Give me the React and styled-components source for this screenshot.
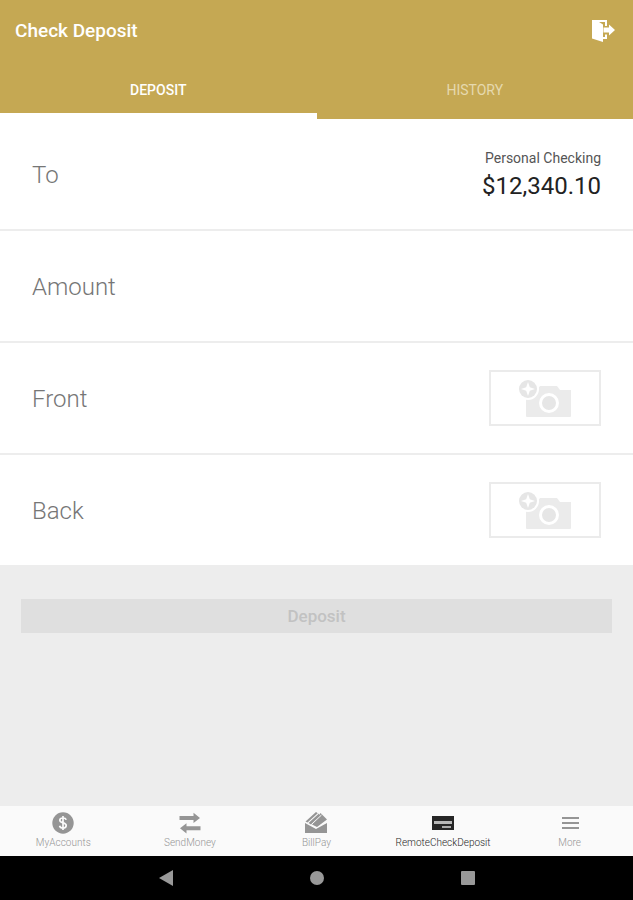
import React, { useState } from "react";
import styled, { createGlobalStyle, ThemeProvider } from "styled-components";

const theme = {
  gold: "#c5a853",
  pageBg: "#ededed",
  line: "#ededed",
  faint: "#ebebeb",
  grey: "#959595",
  dark: "#262626",
};

const GlobalStyle = createGlobalStyle`
  * {
    box-sizing: border-box;
  }
  body {
    margin: 0;
    font-family: Roboto, "Liberation Sans", sans-serif;
    background-color: ${(props) => props.theme.pageBg};
  }
  button, input {
    font-family: inherit;
    border: 0;
    padding: 0;
    background: none;
  }
`;

const Page = styled.div`
  min-height: 100vh;
  display: flex;
  flex-direction: column;
`;

const Header = styled.header`
  background-color: ${(props) => props.theme.gold};
  color: white;
`;

const TitleBar = styled.div`
  height: 61px;
  padding: 0 18px 0 15px;
  display: flex;
  align-items: center;
  justify-content: space-between;
`;

const Title = styled.h1`
  margin: 0;
  font-size: 19px;
  line-height: 24px;
  font-weight: 500;
`;

const ExitButton = styled.button`
  display: flex;
  cursor: pointer;
`;

const Tabs = styled.div`
  display: grid;
  grid-template-columns: 1fr 1fr;
`;

const Tab = styled.button`
  height: 58px;
  border-bottom: 6px solid ${(props) => (props.$active ? "white" : "transparent")};
  padding-top: 6px;
  font-size: 14px;
  font-weight: ${(props) => (props.$active ? 500 : 400)};
  color: ${(props) => (props.$active ? "white" : "#e6d9ae")};
  cursor: pointer;
`;

const Form = styled.form`
  flex: 1;
`;

const Rows = styled.div`
  display: grid;
  gap: 2px;
  background-color: ${(props) => props.theme.line};
`;

const Row = styled.div`
  min-height: 110px;
  padding: 0 32px;
  display: flex;
  align-items: center;
  justify-content: space-between;
  background-color: white;
`;

const Label = styled.label`
  padding-top: 1px;
  font-size: 24px;
  line-height: 32px;
  font-weight: 300;
  color: #767676;
`;

const Account = styled.output`
  padding-top: 3px;
  text-align: right;
`;

const AccountName = styled.div`
  font-size: 14px;
  line-height: 20px;
  color: #555555;
`;

const Balance = styled.div`
  font-size: 24px;
  line-height: 36px;
  color: #222222;
`;

const AmountInput = styled.input`
  flex: 1;
  min-width: 0;
  margin-left: 24px;
  font-size: 24px;
  text-align: right;
  outline: none;
`;

const PhotoButton = styled.button`
  width: 112px;
  height: 56px;
  border: 2px solid ${(props) => props.theme.faint};
  display: flex;
  align-items: center;
  justify-content: center;
  cursor: pointer;
`;

const Actions = styled.div`
  padding: 34px 21px;
`;

const SubmitButton = styled.button`
  width: 100%;
  height: 34px;
  background-color: #dfdfdf;
  color: #c2c2c2;
  font-size: 17px;
  font-weight: 500;
`;

const BottomNav = styled.nav`
  height: 50px;
  display: grid;
  grid-template-columns: repeat(5, 1fr);
  background-color: #fafafa;
`;

const NavLink = styled.a`
  display: flex;
  flex-direction: column;
  align-items: center;
  padding-top: 5px;
  font-size: 10px;
  line-height: 16px;
  font-weight: 300;
  text-decoration: none;
  color: ${(props) => (props.$active ? props.theme.dark : props.theme.grey)};
`;

const SystemBar = styled.footer`
  height: 44px;
  padding: 0 90px;
  display: grid;
  grid-template-columns: repeat(3, 1fr);
  background-color: black;
`;

const SystemButton = styled.button`
  display: flex;
  align-items: center;
  justify-content: center;
`;

const ExitIcon = () => (
  <svg width="24" height="24" viewBox="0 0 24 24" fill="white">
    <path d="M1 1h15v6h-2V3H8l4 2.500v17.500L1 19.500z" />
    <path d="M14 15.500h2v4.500h-5v-2h3z" />
    <path d="M12.500 8.500H18V5.500l6 5.500-6 5.500v-3h-5.500z" />
  </svg>
);

const CameraIcon = () => (
  <svg width="54" height="40" viewBox="0 0 54 40">
    <path d="M8 12h11l3-4h17l3 4h11v26q0 1-1 1H9q-1 0-1-1z" fill="#ebebeb" />
    <circle cx="31" cy="25" r="8.5" fill="#e6e6e6" stroke="white" strokeWidth="3" />
    <circle cx="10" cy="11" r="11" fill="white" />
    <circle cx="10" cy="11" r="9" fill="#e6e6e6" />
    <path d="M10 4l1.8 5.2L17 11l-5.200 1.800L10 18l-1.800-5.200L3 11l5.200-1.800z" fill="white" />
  </svg>
);

const NavIcon = ({ children }) => (
  <svg width="24" height="24" viewBox="0 0 24 24" fill="currentColor">
    {children}
  </svg>
);

const AccountsIcon = () => (
  <NavIcon>
    <circle cx="12" cy="12" r="10.7" />
    <path
      d="M15.2 8.8C14.8 7.5 13.5 7 12 7c-1.9 0-3.2.9-3.2 2.3 0 3.4 6.4 1.8 6.4 5.2 0 1.5-1.3 2.5-3.2 2.5-1.8 0-3.1-.8-3.4-2.2M12 5v14"
      fill="none"
      stroke="#fafafa"
      strokeWidth="1.7"
    />
  </NavIcon>
);

const SendIcon = () => (
  <NavIcon>
    <path d="M1.500 5H15.500V1.800L22 7l-6.500 5V9H1.500zM22.500 19.200H8.500v3.200L2 17.200l6.500-5v3h14z" />
  </NavIcon>
);

const BillIcon = () => (
  <NavIcon>
    <path d="M1 12l11 6 11-6v10H1z" />
    <path d="M16.500 2L23 8.500 13 16l-5-2.500z" />
    <path d="M1.500 10.500L12 1l1.800 1.200L3.500 11.500zM4.500 12L15 2.500v3L7 13.500z" />
    <path d="M8 13L17.500 4" stroke="#fafafa" strokeWidth="1" />
  </NavIcon>
);

const CheckIcon = () => (
  <NavIcon>
    <path d="M1 5h22v14H1z" />
    <path d="M3 11.500h18" stroke="#b8b8b8" strokeWidth="3" />
    <path d="M11 16h9" stroke="#d8d8d8" strokeWidth="1.500" />
  </NavIcon>
);

const MoreIcon = () => (
  <NavIcon>
    <path d="M4 6h17v2H4zM4 11h17v2H4zM4 16h17v2H4z" />
  </NavIcon>
);

const navItems = [
  { name: "MyAccounts", Icon: AccountsIcon },
  { name: "SendMoney", Icon: SendIcon },
  { name: "BillPay", Icon: BillIcon },
  { name: "RemoteCheckDeposit", Icon: CheckIcon },
  { name: "More", Icon: MoreIcon },
];

export default () => {
  const [tab, setTab] = useState("DEPOSIT");
  const [amount, setAmount] = useState("");
  const onSubmit = (e) => {
    e.preventDefault();
  };
  return (
    <ThemeProvider theme={theme}>
      <GlobalStyle />
      <Page>
        <Header>
          <TitleBar>
            <Title>Check Deposit</Title>
            <ExitButton aria-label="Sign out">
              <ExitIcon />
            </ExitButton>
          </TitleBar>
          <Tabs role="tablist">
            {["DEPOSIT", "HISTORY"].map((name) => (
              <Tab
                key={name}
                role="tab"
                aria-selected={tab === name}
                $active={tab === name}
                onClick={() => setTab(name)}
              >
                {name}
              </Tab>
            ))}
          </Tabs>
        </Header>
        <Form onSubmit={onSubmit}>
          <Rows>
            <Row>
              <Label htmlFor="account">To</Label>
              <Account id="account">
                <AccountName>Personal Checking</AccountName>
                <Balance>$12,340.10</Balance>
              </Account>
            </Row>
            <Row>
              <Label htmlFor="amount">Amount</Label>
              <AmountInput
                id="amount"
                inputMode="decimal"
                value={amount}
                onChange={(e) => setAmount(e.target.value)}
              />
            </Row>
            <Row>
              <Label htmlFor="front">Front</Label>
              <PhotoButton id="front" type="button">
                <CameraIcon />
              </PhotoButton>
            </Row>
            <Row>
              <Label htmlFor="back">Back</Label>
              <PhotoButton id="back" type="button">
                <CameraIcon />
              </PhotoButton>
            </Row>
          </Rows>
          <Actions>
            <SubmitButton disabled>Deposit</SubmitButton>
          </Actions>
        </Form>
        <BottomNav>
          {navItems.map(({ name, Icon }) => (
            <NavLink key={name} href="#" $active={name === "RemoteCheckDeposit"}>
              <Icon />
              {name}
            </NavLink>
          ))}
        </BottomNav>
        <SystemBar>
          <SystemButton aria-label="Back">
            <svg width="16" height="18" viewBox="0 0 16 18" fill="#999999">
              <path d="M15 1v16L1 9z" />
            </svg>
          </SystemButton>
          <SystemButton aria-label="Home">
            <svg width="16" height="16" viewBox="0 0 16 16" fill="#999999">
              <circle cx="8" cy="8" r="7" />
            </svg>
          </SystemButton>
          <SystemButton aria-label="Overview">
            <svg width="16" height="16" viewBox="0 0 16 16" fill="#999999">
              <rect x="1" y="1" width="14" height="14" rx="1" />
            </svg>
          </SystemButton>
        </SystemBar>
      </Page>
    </ThemeProvider>
  );
};
